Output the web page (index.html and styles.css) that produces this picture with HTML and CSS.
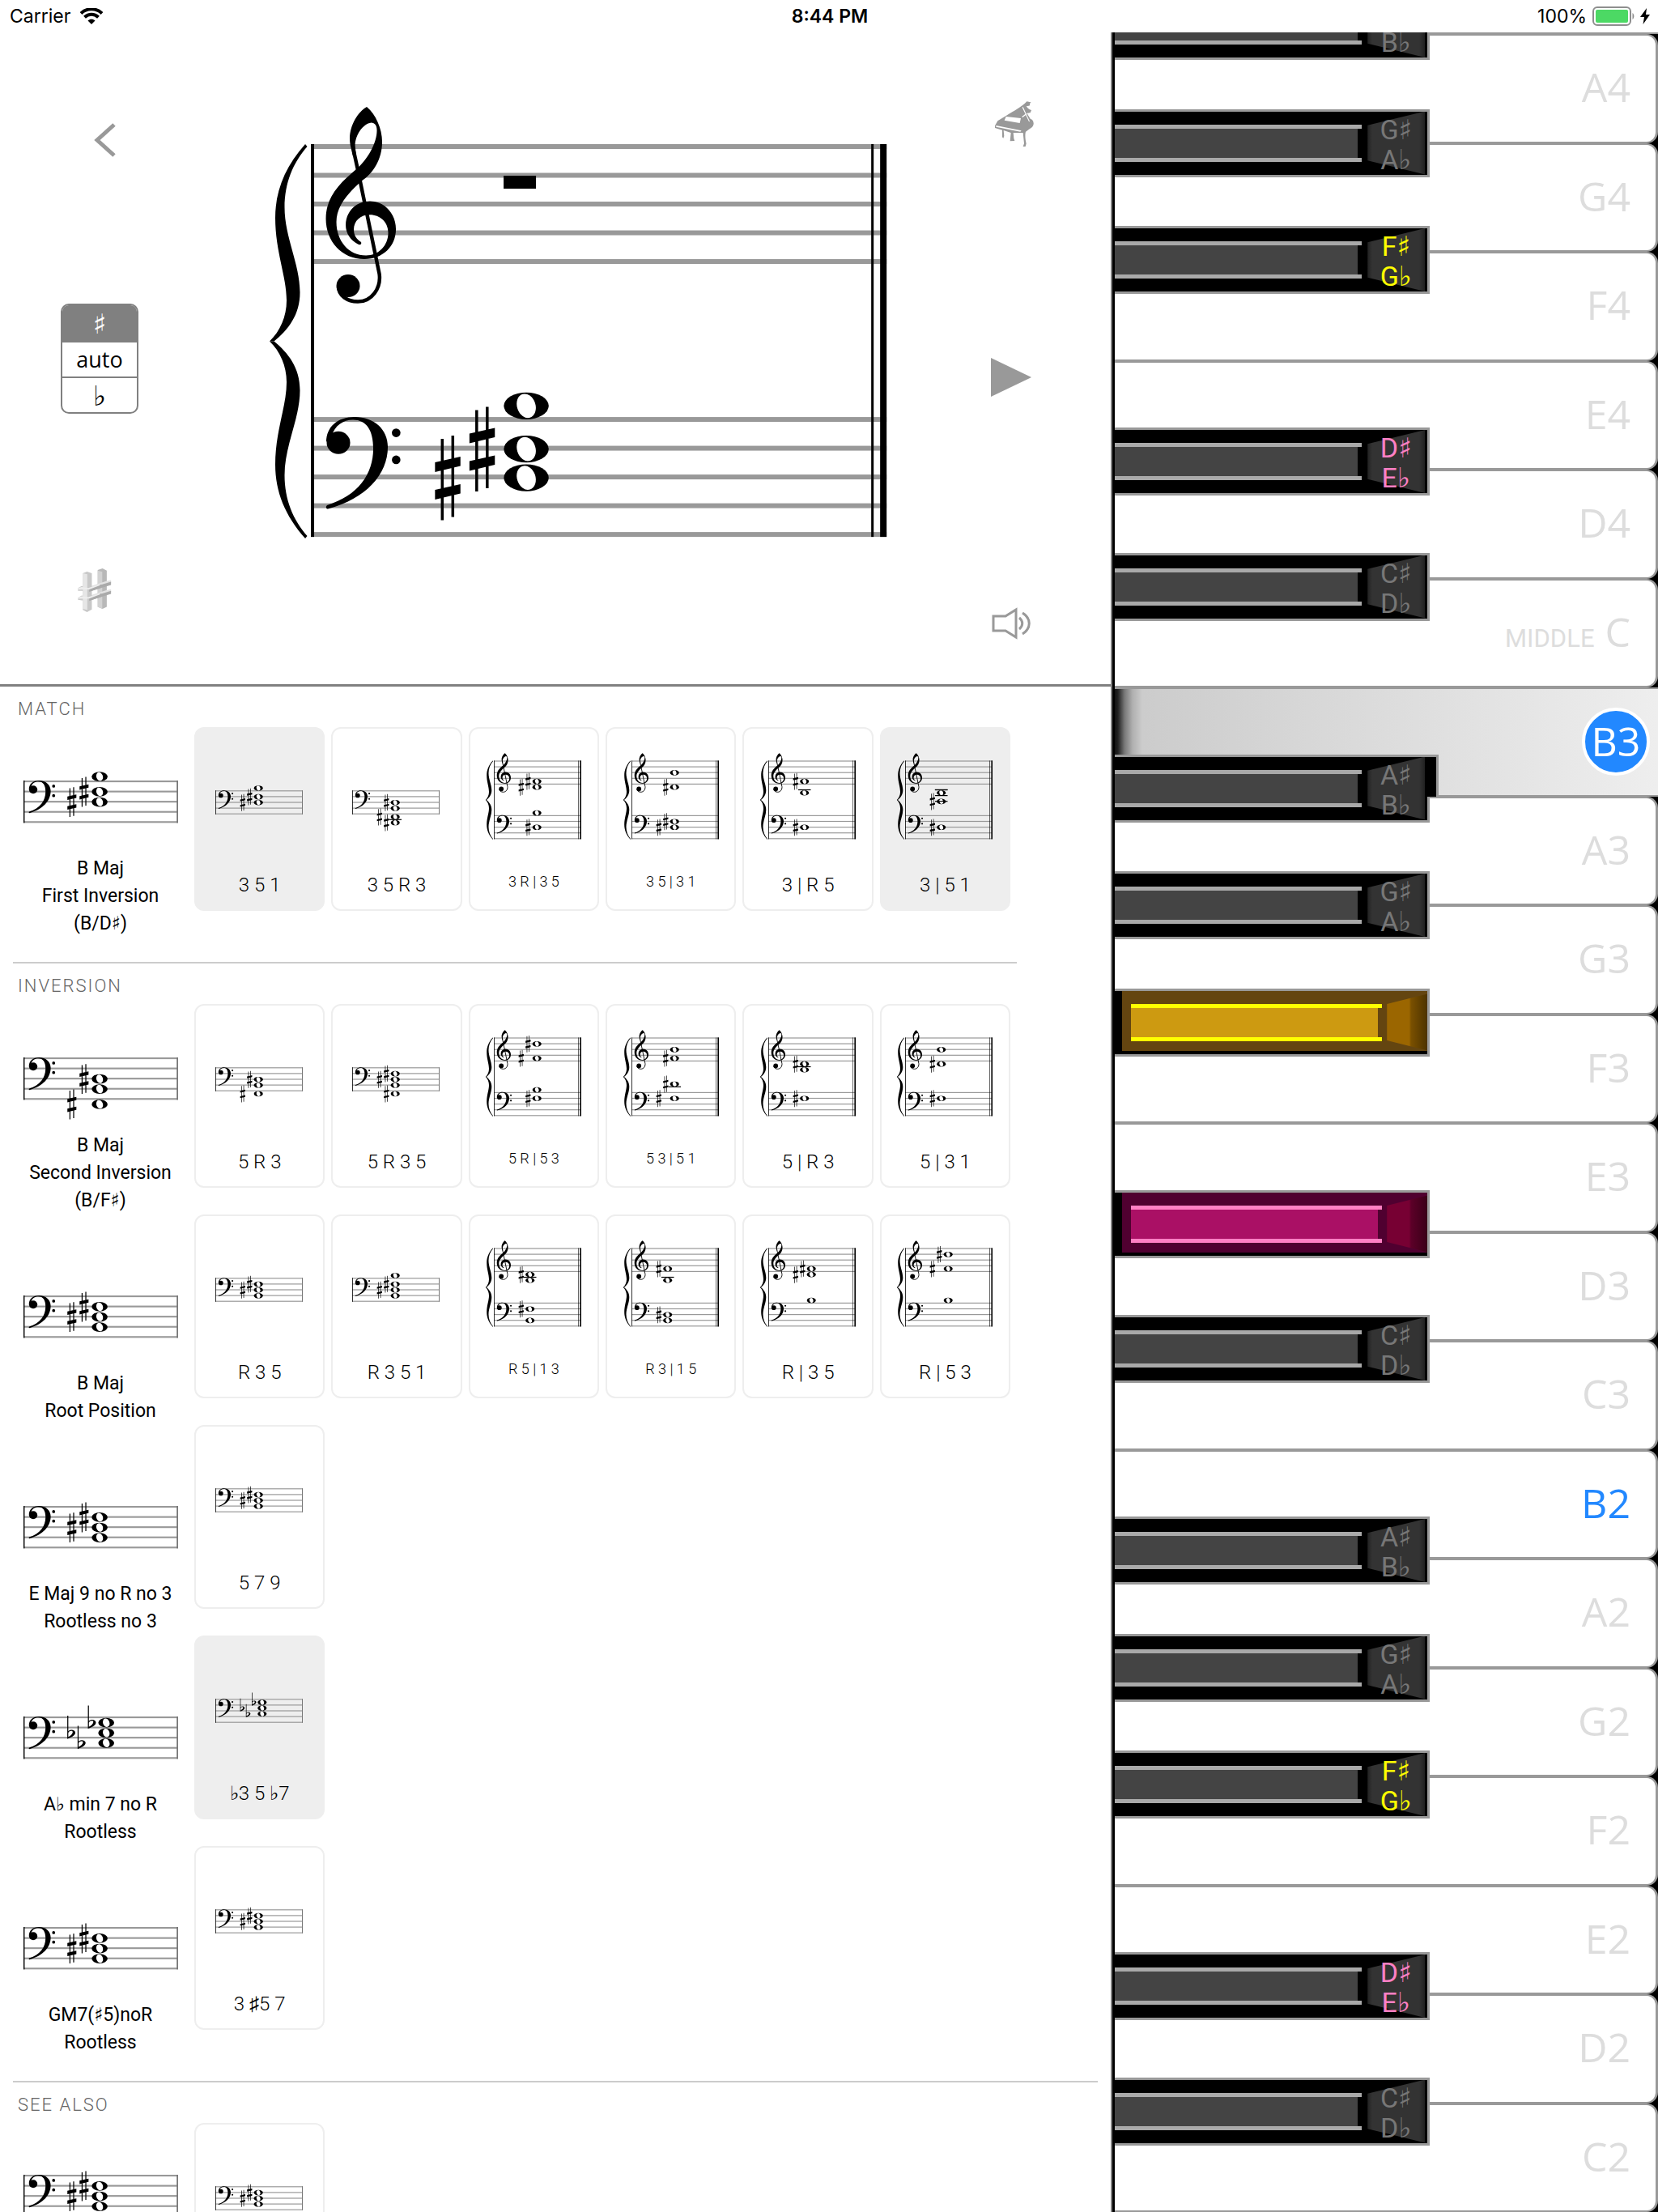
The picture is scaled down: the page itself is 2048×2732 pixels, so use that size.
FILE: index.html
```html
<!DOCTYPE html>
<html lang="en">
<head>
    <meta charset="UTF-8">
    <meta name="viewport" content="width=device-width, initial-scale=1.0">
    <title>Chord Finder</title>
    <link rel="stylesheet" href="styles.css">
</head>
<body>
    <!-- Music glyphs shared by every staff, 35.5 units per staff space -->
    <svg class="sprite" aria-hidden="true">
        <symbol id="treble-clef" overflow="visible">
            <path d="M69,-49 C80,-40 88,-22 88,-6 C88,16 77,33 62,43 C48,56 31.5,72 31.5,93 C31.5,117 47,134.5 68,134.5 C84,134.5 95.5,122 95.5,106.5 C95.5,93 85,84.3 73,84.3 C61,84.3 53,92 53,102.5 C53,110 57,115 62,118 C63,121 60.5,122 58,120.5 C49,116 43,107 43,97 C43,80 56,67.5 73,67.5 C91,67.5 105,83 105,102 C105,123 89,139 66,139 C38,139 18.5,117 18.5,89 C18.5,62 36,45 56,28 C70,16 81.5,-4 81.5,-20 C81.5,-26 79,-29.5 74.5,-29.5 C64,-28 54.6,-14 54.6,-1 L56,12 L52,12 C49,0 48,-4 48,-10 C48,-26 58,-43 69,-49 Z"/>
            <path d="M53,6 L58,29 L84.5,157 C87,175 75,191.5 58,191.5 C45,191.5 34,184 34,173" fill="none" stroke="#000" stroke-width="4.5"/>
            <ellipse cx="46" cy="172" rx="14.5" ry="14"/>
        </symbol>
        <symbol id="bass-clef" overflow="visible">
            <path d="M26,20 C29,8 40,.5 52,.5 C69,.5 77,14 77,36 C77,68 58,94 20,106 C18,108 18.5,110.5 21,110.5 C68,98 95,68 95,34 C95,12 78,-3 54,-3 C33,-3 19,9 19,28 Z"/>
            <ellipse cx="34" cy="28.7" rx="14.5" ry="14"/>
            <circle cx="105.3" cy="16.5" r="5.3"/>
            <circle cx="105.3" cy="49.8" r="5.3"/>
        </symbol>
        <symbol id="whole-note" overflow="visible">
            <ellipse rx="27.7" ry="16.6"/>
            <ellipse rx="11.4" ry="15.2" transform="rotate(-18)" fill="#fff"/>
        </symbol>
        <symbol id="sharp" overflow="visible">
            <path d="M-8.5,-48 h3.5 V52.5 h-3.5 Z M4.5,-52 h3.5 V48.5 h-3.5 Z M-15.7,-19 L15.7,-26 V-14.5 L-15.7,-7 Z M-15.7,15 L15.7,8 V19.5 L-15.7,27 Z"/>
        </symbol>
        <symbol id="flat" overflow="visible">
            <path fill-rule="evenodd" d="M0,-60 H3.5 V-6 C10,-13 28,-12 28,0 C27,10 12,16 0,21 Z M3.5,0 V14 C12,9 19,3 19,-3 C18,-9 7,-8 3.5,0 Z"/>
        </symbol>
        <symbol id="brace" overflow="visible">
            <path id="brace-half" d="M-7,-3 C-32,25 -44,55 -44,88 C-44,130 -30,160 -30,190 C-30,210 -38,228 -51,240.5 L-45.5,240.5 C-28,226 -13.5,208 -13.5,180 C-13.5,145 -32.5,112 -32.5,75 C-32.5,45 -22,20 -4.5,0 Z"/>
            <use href="#brace-half" transform="matrix(1 0 0 -1 0 481)"/>
        </symbol>
    </svg>

    <header class="status-bar">
        <div class="status-left">
            <span>Carrier</span>
            <svg class="wifi" viewBox="0 0 28 20" aria-hidden="true">
                <path d="M1,6.500 C8,-.5 20,-.5 27,6.500" fill="none" stroke="#000" stroke-width="4"/>
                <path d="M5.500,11.300 C10.500,6.500 17.500,6.500 22.500,11.300" fill="none" stroke="#000" stroke-width="4"/>
                <path d="M9.500,15.500 C12,13 16,13 18.500,15.500 L14,20 Z"/>
            </svg>
        </div>
        <time class="clock">8:44 PM</time>
        <div class="status-right">
            <span>100%</span>
            <svg class="battery" viewBox="0 0 52 24" aria-hidden="true">
                <rect x="1" y="1" width="46" height="22" rx="5" fill="none" stroke="#8e8e8e" stroke-width="2"/>
                <rect x="4" y="4" width="40" height="16" rx="2" fill="#4cd964"/>
                <path d="M49.5,8 C52,10 52,14 49.5,16 Z" fill="#8e8e8e"/>
            </svg>
            <svg class="bolt" viewBox="0 0 12 20" aria-hidden="true"><path d="M8,0 L0,11 H5 L3.5,20 L12,8 H7 Z"/></svg>
        </div>
    </header>

    <div class="app">
        <main class="left-panel">
            <section class="score">
                <div class="tools">
                    <button class="tool" aria-label="Back">
                        <svg width="40" height="42" viewBox="-14 0 40 42"><path d="M24,2 L3,21 L24,40" fill="none" stroke="#999" stroke-width="5"/></svg>
                    </button>
                    <div class="accidentals">
                        <button class="sign active">♯</button>
                        <button>auto</button>
                        <button class="sign">♭</button>
                    </div>
                    <button class="tool" aria-label="Key signature">
                        <svg width="54" height="54" viewBox="108 68 162 164">
                            <path fill="#b8b8b8" d="M182,74 L200,68 L216,76 V212 L200,220 L182,212 Z"/>
                            <path fill="#d2d2d2" d="M182,76 L199,81 V220 L182,212 Z"/>
                            <path fill="#cacaca" d="M108,142 L122,134 L146,142 V156 L122,152 L108,152 Z M108,178 L122,170 L146,176 V190 L122,188 L108,186 Z"/>
                            <path fill="#e2e2e2" d="M146,138 L214,116 L232,112 V122 L146,148 Z M146,172 L214,150 L232,146 V156 L146,182 Z"/>
                            <path fill="#aaa" d="M146,144 L232,118 V130 L146,156 Z M146,178 L232,152 V164 L146,190 Z"/>
                            <path fill="#c8c8c8" d="M126,86 L142,80 L160,86 V222 L142,232 L126,224 Z"/>
                            <path fill="#e6e6e6" d="M126,86 L143,90 V224 L126,220 Z"/>
                            <path fill="#aaa" d="M150,144 L196,128 V140 L150,156 Z M150,178 L196,162 V174 L150,190 Z"/>
                            <path fill="#ededed" d="M108,142 L122,138 L146,142 L190,128 L190,132 L150,147 L108,148 Z M108,177 L122,173 L146,176 L190,162 L190,166 L150,181 L108,182 Z"/>
                        </svg>
                    </button>
                </div>
                <div class="score-staff">
                    <svg class="staff" viewBox="-55 -50 770 540" data-width="711" data-rest data-treble="" data-bass="B3 F#3:1 D#3:0"></svg>
                </div>
                <div class="tools tools-right">
                    <button class="tool" aria-label="Instrument">
                        <svg width="56" height="56" viewBox="36 47 168 168">
                            <path fill="#999" d="M178,48 L194,51 C189,54 188,60 190,63 L176,66 C182,74 188,79 195,80 L191,90 L178,91 L191,112 C199,114 204,122 203,132 C202,141 196,146 186,151 L174,160 C171,170 172,190 176,204 L173,215 L164,215 L168,204 L164,164 L128,164 L130,185 L133,194 L116,195 L119,164 L92,155 L94,176 L91,184 L87,180 V154 L60,146 V138 L70,120 L100,102 C128,84 160,68 178,48 Z"/>
                            <path fill="#fff" d="M101,104 L156,110 L152,128 L95,118 Z M64,137 L158,156 L154,160 L64,142 Z M164,68 L189,122 L186,123 L161,70 Z M160,104 L176,92 L178,95 L162,108 Z"/>
                        </svg>
                    </button>
                    <button class="tool" aria-label="Play">
                        <svg width="50" height="48" viewBox="0 0 50 48"><path fill="#999" d="M0,0 L50,24 L0,48 Z"/></svg>
                    </button>
                    <button class="tool" aria-label="Sound">
                        <svg width="50" height="40" viewBox="0 0 50 40">
                            <g fill="none" stroke="#999" stroke-width="3">
                                <path d="M3,11 H18 L31,3 V37 L18,29 H3 Z"/>
                                <path d="M35,13 C40,17 40,23 35,27"/>
                                <path d="M39,7 C50,14 50,26 39,33"/>
                            </g>
                        </svg>
                    </button>
                </div>
            </section>

            <section class="group group-match">
                <h2>MATCH</h2>
                <div class="chord-row">
                    <div class="chord">
                        <svg class="staff" viewBox="0 -3 540 148" data-bass="B3 F#3:1 D#3:0"></svg>
                        <p>B Maj<br>First Inversion<br>(B/D♯)</p>
                    </div>
                    <div class="voicings">
                        <button class="card selected"><svg class="staff" viewBox="-25 -234 600 540" data-bass="B3 F#3:1 D#3:0"></svg><span>3 5 1</span></button>
                        <button class="card"><svg class="staff" viewBox="-25 -234 600 540" data-bass="D#3:1 B2 F#2:0 D#2:1"></svg><span>3 5 R 3</span></button>
                        <button class="card small"><svg class="staff" viewBox="-55 -50 600 540" data-treble="F#4:1 D#4:0" data-bass="B3 D#3:1"></svg><span>3 R | 3 5</span></button>
                        <button class="card small"><svg class="staff" viewBox="-55 -50 600 540" data-treble="B4 D#4:1" data-bass="F#3:1 D#3:0"></svg><span>3 5 | 3 1</span></button>
                        <button class="card"><svg class="staff" viewBox="-55 -50 600 540" data-treble="F#4:0 B3" data-bass="D#3:0"></svg><span>3 | R 5</span></button>
                        <button class="card selected"><svg class="staff" viewBox="-55 -50 600 540" data-treble="B3 F#3:0" data-bass="D#3:0"></svg><span>3 | 5 1</span></button>
                    </div>
                </div>
            </section>

            <section class="group group-inversion">
                <h2>INVERSION</h2>
                <div class="chord-row">
                    <div class="chord">
                        <svg class="staff" viewBox="0 -3 540 148" data-bass="D#3:1 B2 F#2:0"></svg>
                        <p>B Maj<br>Second Inversion<br>(B/F♯)</p>
                    </div>
                    <div class="voicings">
                        <button class="card"><svg class="staff" viewBox="-25 -234 600 540" data-bass="D#3:1 B2 F#2:0"></svg><span>5 R 3</span></button>
                        <button class="card"><svg class="staff" viewBox="-25 -234 600 540" data-bass="F#3:1 D#3:0 B2 F#2:1"></svg><span>5 R 3 5</span></button>
                        <button class="card small"><svg class="staff" viewBox="-55 -50 600 540" data-treble="D#5:1 F#4:0" data-bass="B3 F#3:1"></svg><span>5 R | 5 3</span></button>
                        <button class="card small"><svg class="staff" viewBox="-55 -50 600 540" data-treble="B4 F#4:1" data-bass="D#4:1 F#3:0"></svg><span>5 3 | 5 1</span></button>
                        <button class="card"><svg class="staff" viewBox="-55 -50 600 540" data-treble="D#4:0 B3" data-bass="F#3:0"></svg><span>5 | R 3</span></button>
                        <button class="card"><svg class="staff" viewBox="-55 -50 600 540" data-treble="B4 D#4:0" data-bass="F#3:0"></svg><span>5 | 3 1</span></button>
                    </div>
                </div>
                <div class="chord-row">
                    <div class="chord">
                        <svg class="staff" viewBox="0 -3 540 148" data-bass="F#3:1 D#3:0 B2"></svg>
                        <p>B Maj<br>Root Position</p>
                    </div>
                    <div class="voicings">
                        <button class="card"><svg class="staff" viewBox="-25 -234 600 540" data-bass="F#3:1 D#3:0 B2"></svg><span>R 3 5</span></button>
                        <button class="card"><svg class="staff" viewBox="-25 -234 600 540" data-bass="B3 F#3:1 D#3:0 B2"></svg><span>R 3 5 1</span></button>
                        <button class="card small"><svg class="staff" viewBox="-55 -50 600 540" data-treble="D#4:0 B3" data-bass="F#3:0 B2"></svg><span>R 5 | 1 3</span></button>
                        <button class="card small"><svg class="staff" viewBox="-55 -50 600 540" data-treble="F#4:0 B3" data-bass="D#3:0 B2"></svg><span>R 3 | 1 5</span></button>
                        <button class="card"><svg class="staff" viewBox="-55 -50 600 540" data-treble="F#4:1 D#4:0" data-bass="B3"></svg><span>R | 3 5</span></button>
                        <button class="card"><svg class="staff" viewBox="-55 -50 600 540" data-treble="D#5:1 F#4:0" data-bass="B3"></svg><span>R | 5 3</span></button>
                    </div>
                </div>
                <div class="chord-row">
                    <div class="chord">
                        <svg class="staff" viewBox="0 -3 540 148" data-bass="F#3:1 D#3:0 B2"></svg>
                        <p>E Maj 9 no R no 3<br>Rootless no 3</p>
                    </div>
                    <div class="voicings">
                        <button class="card"><svg class="staff" viewBox="-25 -234 600 540" data-bass="F#3:1 D#3:0 B2"></svg><span>5 7 9</span></button>
                    </div>
                </div>
                <div class="chord-row">
                    <div class="chord">
                        <svg class="staff" viewBox="0 -3 540 148" data-bass="Gb3:2 Eb3:0 Cb3:1"></svg>
                        <p>A♭ min 7 no R<br>Rootless</p>
                    </div>
                    <div class="voicings">
                        <button class="card selected"><svg class="staff" viewBox="-25 -234 600 540" data-bass="Gb3:2 Eb3:0 Cb3:1"></svg><span>♭3 5 ♭7</span></button>
                    </div>
                </div>
                <div class="chord-row">
                    <div class="chord">
                        <svg class="staff" viewBox="0 -3 540 148" data-bass="F#3:1 D#3:0 B2"></svg>
                        <p>GM7(♯5)noR<br>Rootless</p>
                    </div>
                    <div class="voicings">
                        <button class="card"><svg class="staff" viewBox="-25 -234 600 540" data-bass="F#3:1 D#3:0 B2"></svg><span>3 ♯5 7</span></button>
                    </div>
                </div>
            </section>

            <section class="group">
                <h2>SEE ALSO</h2>
                <div class="chord-row chord-row-loading">
                    <div class="chord">
                        <svg class="staff" viewBox="0 -3 540 148" data-bass="F#3:1 D#3:0 B2"></svg>
                    </div>
                    <div class="voicings">
                        <button class="card" aria-label="See also"><svg class="staff" viewBox="-25 -234 600 540" data-bass="F#3:1 D#3:0 B2"></svg></button>
                    </div>
                </div>
            </section>
        </main>

        <aside class="keyboard">
            <div class="key key-cut"><button class="black up"><span>B♭</span></button></div>
            <div class="key"><button class="white">A4</button><button class="black"><span>G♯<br>A♭</span></button></div>
            <div class="key"><button class="white">G4</button><button class="black down yellow"><span>F♯<br>G♭</span></button></div>
            <div class="key"><button class="white">F4</button></div>
            <div class="key"><button class="white">E4</button><button class="black up pink"><span>D♯<br>E♭</span></button></div>
            <div class="key"><button class="white">D4</button><button class="black down"><span>C♯<br>D♭</span></button></div>
            <div class="key"><button class="white"><small>MIDDLE</small> C</button></div>
            <div class="key key-pressed"><button class="white"><span class="badge">B3</span></button><button class="black up"><span>A♯<br>B♭</span></button></div>
            <div class="key"><button class="white">A3</button><button class="black"><span>G♯<br>A♭</span></button></div>
            <div class="key"><button class="white">G3</button><button class="black down lit lit-yellow" aria-label="F sharp 3"></button></div>
            <div class="key"><button class="white">F3</button></div>
            <div class="key"><button class="white">E3</button><button class="black up lit lit-pink" aria-label="D sharp 3"></button></div>
            <div class="key"><button class="white">D3</button><button class="black down"><span>C♯<br>D♭</span></button></div>
            <div class="key"><button class="white">C3</button></div>
            <div class="key"><button class="white blue">B2</button><button class="black up"><span>A♯<br>B♭</span></button></div>
            <div class="key"><button class="white">A2</button><button class="black"><span>G♯<br>A♭</span></button></div>
            <div class="key"><button class="white">G2</button><button class="black down yellow"><span>F♯<br>G♭</span></button></div>
            <div class="key"><button class="white">F2</button></div>
            <div class="key"><button class="white">E2</button><button class="black up pink"><span>D♯<br>E♭</span></button></div>
            <div class="key"><button class="white">D2</button><button class="black down"><span>C♯<br>D♭</span></button></div>
            <div class="key"><button class="white">C2</button></div>
        </aside>
    </div>

    <script src="script.js"></script>
</body>
</html>
```
FILE: styles.css
```css
*,
*::before,
*::after {
    box-sizing: border-box;
}
body {
    margin: 0;
    height: 100vh;
    display: flex;
    flex-direction: column;
    overflow: hidden;
    background-color: #fff;
    color: #000;
    font-family: Roboto, "DejaVu Sans", sans-serif;
    font-size: 23px;
}
button {
    margin: 0;
    padding: 0;
    border: none;
    background: none;
    color: inherit;
    font: inherit;
    cursor: pointer;
}
.sprite {
    position: absolute;
    width: 0;
    height: 0;
}

/* Status bar */
.status-bar {
    flex: none;
    height: 40px;
    padding: 0 10px 0 12px;
    display: grid;
    grid-template-columns: 1fr auto 1fr;
    align-items: center;
    font-family: Inter, sans-serif;
    font-size: 23px;
}
.status-left,
.status-right {
    display: flex;
    align-items: center;
    gap: 12px;
}
.status-right {
    justify-content: flex-end;
    gap: 7px;
}
.clock {
    font-weight: 600;
}
.wifi {
    width: 28px;
    height: 20px;
}
.battery {
    width: 52px;
    height: 24px;
}
.bolt {
    width: 12px;
    height: 20px;
}

.app {
    flex: 1;
    min-height: 0;
    display: flex;
}
.left-panel {
    flex: 1;
    min-width: 0;
    overflow: hidden;
}

/* Score area */
.score {
    display: flex;
    border-bottom: 3px solid #808080;
}
.tools {
    flex: none;
    width: 246px;
    padding: 112px 0 89px;
    display: flex;
    flex-direction: column;
    align-items: center;
    justify-content: space-between;
}
.tools-right {
    padding: 85px 0 55px;
}
.tool {
    display: flex;
}
.accidentals {
    width: 96px;
    margin-bottom: 10px;
    display: flex;
    flex-direction: column;
    border: 2px solid #808080;
    border-radius: 10px;
    overflow: hidden;
}
.accidentals button {
    height: 44px;
    font-family: "Open Sans", "DejaVu Sans", sans-serif;
    font-size: 27px;
    line-height: 36px;
}
.accidentals .sign {
    font-size: 34px;
}
.accidentals button + button {
    border-top: 2px solid #808080;
}
.accidentals .active {
    background-color: #808080;
    color: #fff;
}
.score-staff {
    flex: 1;
    padding: 91px 27px 174px 83px;
}
.score-staff .staff {
    width: 100%;
}
.staff {
    display: block;
    overflow: visible;
}

/* Chord list */
.group {
    padding: 0 124px 32px 16px;
    position: relative;
}
.group h2 {
    margin: 0;
    padding: 5px 0 0 6px;
    height: 50px;
    font-size: 22px;
    font-weight: 300;
    line-height: 46px;
    letter-spacing: 2px;
    color: #666;
}
.group-match::after,
.group-inversion::after {
    content: "";
    position: absolute;
    left: 16px;
    right: 116px;
    bottom: 0;
    height: 2px;
    background-color: #ccc;
}
.group-inversion::after {
    right: 16px;
}
.chord-row {
    height: 260px;
    display: flex;
    gap: 8px;
}
.chord {
    flex: none;
    width: 216px;
    display: flex;
    flex-direction: column;
    align-items: center;
    justify-content: flex-end;
}
.chord .staff {
    width: 191px;
    margin-bottom: 40px;
}
.chord-row-loading .chord {
    justify-content: flex-start;
    padding-top: 64px;
}
.chord p {
    margin: 0;
    line-height: 34px;
    text-align: center;
    white-space: nowrap;
}
.voicings {
    flex: 1;
    display: grid;
    grid-template-columns: repeat(6, 1fr);
    gap: 8px;
    align-items: start;
}
.card {
    height: 227px;
    padding-top: 30px;
    display: flex;
    flex-direction: column;
    align-items: center;
    border: 2px solid #eee;
    border-radius: 12px;
    font-size: 24px;
    font-weight: 300;
}
.card .staff {
    width: 120px;
}
.card span {
    margin-top: 38px;
    line-height: 34px;
}
.card.small span {
    font-size: 18px;
    line-height: 26px;
}
.card.selected {
    background-color: #eee;
}

/* Keyboard */
.keyboard {
    flex: none;
    width: 33%;
    display: flex;
    flex-direction: column;
    overflow: hidden;
    background-color: #000;
    border-left: 2px solid #808080;
    padding-left: 3px;
}
.key {
    flex: 1;
    position: relative;
    display: flex;
}
.key-cut {
    flex: none;
    height: 2px;
    background-color: #999;
}
.white {
    flex: 1;
    padding: 0 31px 4px 0;
    background-color: #fff;
    border: 2px solid #999;
    border-width: 2px 3px 2px 0;
    border-radius: 0 14px 14px 0;
    font-family: "Open Sans", sans-serif;
    font-size: 50px;
    color: #ddd;
    text-align: right;
}
.white small {
    font-family: Roboto, sans-serif;
    font-size: 31px;
}
.white.blue {
    color: #28f;
}
.key-pressed .white {
    padding: 0 10px 0 0;
    border-right: none;
    border-radius: 0;
    background: linear-gradient(90deg, #111 0, #222 4px, #777 12px, #b0b0b0 22px, #ccc 34px, #eee 100%);
}
.badge {
    display: inline-flex;
    align-items: center;
    justify-content: center;
    width: 84px;
    height: 84px;
    padding-bottom: 2px;
    border: 4px solid #fff;
    border-radius: 50%;
    background-color: #28f;
    color: #fff;
}

/* Black keys straddle the lower edge of the white key that holds them */
.black {
    position: absolute;
    z-index: 1;
    left: 0;
    bottom: -42px;
    width: 58%;
    height: 84px;
    padding: 0;
    background-color: #000;
    border: 3px solid #999;
    border-left: none;
    font-size: 34px;
    line-height: 37px;
    color: #777;
}
.black.up {
    bottom: -32px;
}
.black.down {
    bottom: -52px;
}
.black::before {
    content: "";
    position: absolute;
    left: 0;
    top: 16px;
    width: 305px;
    height: 46px;
    background: linear-gradient(#444, #444) no-repeat 0 0 / 300px 100%;
    border: 5px solid #a9a9a9;
    border-width: 5px 0;
    background-clip: padding-box;
}
.black::after {
    content: "";
    position: absolute;
    top: 0;
    right: 3px;
    width: 71px;
    height: 78px;
    background: linear-gradient(90deg, #222, #333 6px, #333 64px, #222);
    clip-path: polygon(0 22%, 100% 0, 100% 100%, 0 78%);
}
.black span {
    position: absolute;
    z-index: 1;
    top: 4px;
    right: 6px;
    width: 66px;
    text-align: center;
}
.key-cut .black span {
    top: 41px;
}
.black.yellow {
    color: #ff0;
}
.black.pink {
    color: #ff80c4;
}
/* Gap that opens in front of the black key when its neighbour is down */
.key-pressed::after {
    content: "";
    position: absolute;
    z-index: 2;
    left: calc(58% - 3px);
    bottom: 0;
    width: 14px;
    height: 52px;
    background-color: #000;
    border: 3px solid #999;
    border-width: 3px 3px 0 0;
}
.black.lit::before {
    left: 20px;
    width: 310px;
}
.black.lit::after {
    right: 0;
    top: 4px;
    width: 50px;
    height: 70px;
    clip-path: polygon(0 18%, 100% 0, 100% 100%, 0 82%);
}
.black.lit-yellow {
    background: linear-gradient(#644510, #644510) no-repeat 9px 0 / 100% 74px #000;
}
.black.lit-yellow::before {
    background: linear-gradient(#cd9a11, #cd9a11) no-repeat 0 0 / 305px 100%;
    border-color: #ff0;
}
.black.lit-yellow::after {
    background: linear-gradient(90deg, #9b6600 55%, #7a5000 60%, #4d3300);
}
.black.lit-pink {
    background: linear-gradient(#500030, #500030) no-repeat 9px 0 / 100% 74px #000;
}
.black.lit-pink::before {
    background: linear-gradient(#aa1065, #aa1065) no-repeat 0 0 / 305px 100%;
    border-color: #ff80c4;
}
.black.lit-pink::after {
    background: linear-gradient(90deg, #770033 55%, #5c0028 60%, #3a0018);
}
```
FILE: script.js
```javascript
// Draws every staff from its data-treble / data-bass note lists.
// A note is written as pitch:column, the column being that of its accidental.
const STEP = 17.75;
const BASS_TOP = 337;
const LETTERS = 'CDEFGAB';

function parseNotes(text) {
    return (text || '').split(' ').filter(Boolean).map(item => {
        const [, letter, accidental, octave, column] = item.match(/^([A-G])([#b]?)(\d):?(\d?)$/);
        return {
            degree: octave * 7 + LETTERS.indexOf(letter),
            accidental,
            column: Number(column || 0)
        };
    });
}

function lines(top, width) {
    let out = '';
    for (let i = 0; i < 5; i++) {
        out += `<rect x="0" y="${top + i * STEP * 2 - 3}" width="${width}" height="6" fill="#999"/>`;
    }
    return out;
}

function drawNotes(notes, topDegree, top, noteX, columnWidth) {
    let out = '';
    notes.forEach(note => {
        const step = topDegree - note.degree;
        const y = top + step * STEP + 1;
        out += `<use href="#whole-note" x="${noteX + 28}" y="${y}"/>`;
        if (note.accidental === '#') {
            out += `<use href="#sharp" x="${153 + note.column * columnWidth + 16}" y="${y}"/>`;
        } else if (note.accidental === 'b') {
            out += `<use href="#flat" x="${153 + note.column * columnWidth}" y="${y}"/>`;
        }
        // Ledger lines below and above the staff
        for (let s = 10; s <= step; s += 2) {
            out += `<rect x="${noteX - 11}" y="${top + s * STEP - 3}" width="78" height="6"/>`;
        }
        for (let s = -2; s >= step; s -= 2) {
            out += `<rect x="${noteX - 11}" y="${top + s * STEP - 3}" width="78" height="6"/>`;
        }
    });
    return out;
}

document.querySelectorAll('.staff').forEach(svg => {
    const width = Number(svg.dataset.width || 540);
    const grand = 'treble' in svg.dataset;
    const treble = parseNotes(svg.dataset.treble);
    const bass = parseNotes(svg.dataset.bass);
    const bassTop = grand ? BASS_TOP : 0;
    const all = treble.concat(bass).filter(note => note.accidental);
    const columnWidth = all.some(note => note.accidental === 'b') ? 36 : 42.5;
    const columns = Math.max(...all.map(note => note.column)) + 1;
    const noteX = 153 + columns * columnWidth;

    let out = lines(bassTop, width);
    if (grand) {
        const height = BASS_TOP + 8 * STEP + 6;
        out += lines(0, width);
        out += `<rect x="0" y="-3" width="4" height="${height}"/>`;
        out += `<rect x="${width - 19}" y="-3" width="3" height="${height}"/>`;
        out += `<rect x="${width - 8}" y="-3" width="8" height="${height}"/>`;
        out += '<use href="#brace"/><use href="#treble-clef"/>';
        out += drawNotes(treble, 5 * 7 + 3, 0, noteX, columnWidth);
    } else {
        out += '<rect x="0" y="-3" width="4" height="148"/>';
        out += `<rect x="${width - 5}" y="-3" width="5" height="148" fill="#777"/>`;
    }
    if ('rest' in svg.dataset) {
        out += `<rect x="${noteX}" y="36" width="40" height="16"/>`;
    }
    out += `<use href="#bass-clef" y="${bassTop}"/>`;
    out += drawNotes(bass, 3 * 7 + 5, bassTop, noteX, columnWidth);
    svg.innerHTML = out;
});
```
